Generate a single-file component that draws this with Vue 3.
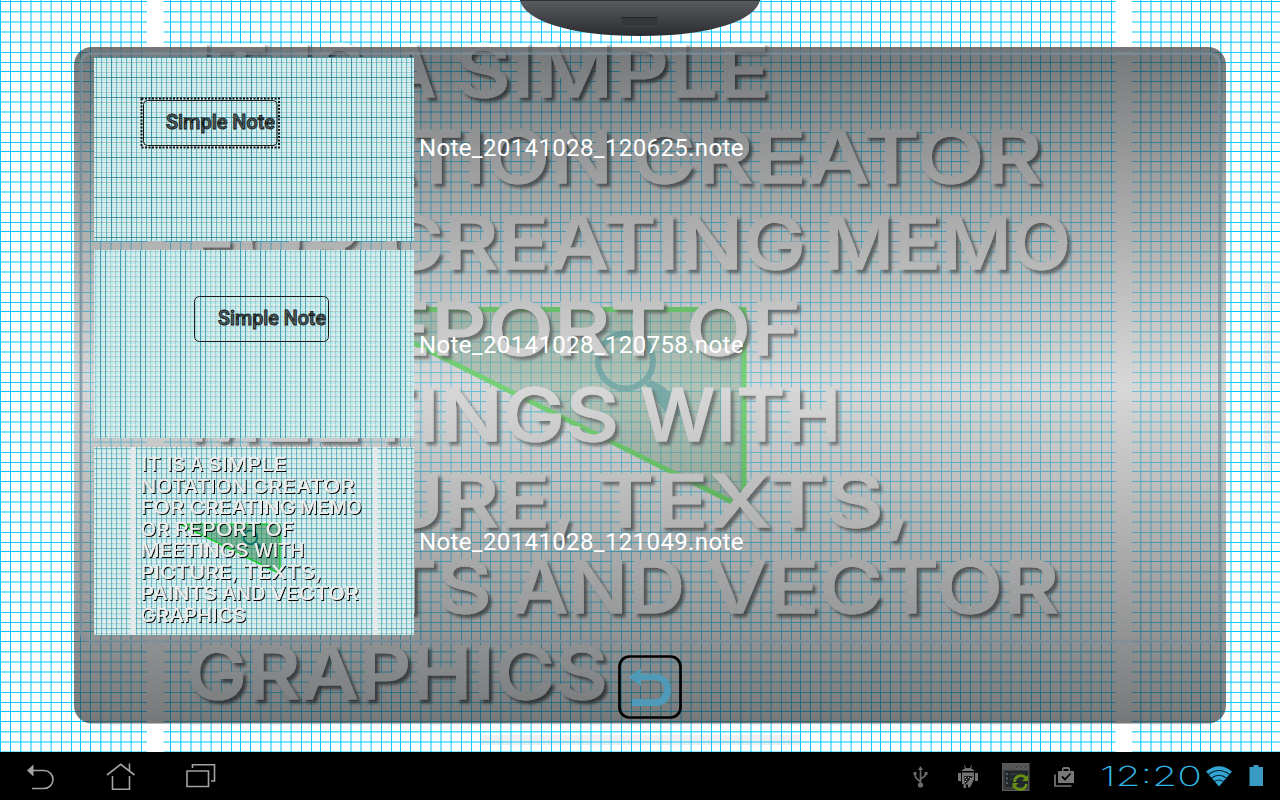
<script setup>
const words = [
  [97, [['IT', 190, 78], ['IS', 292, 72], ['A', 386, 50], ['SIMPLE', 455, 315]]],
  [183, [['NOTATION', 186, 427], ['CREATOR', 631, 411]]],
  [269, [['FOR', 186, 174], ['CREATING', 382, 424], ['MEMO', 823, 248]]],
  [355, [['OR', 186, 116], ['REPORT', 322, 345], ['OF', 686, 115]]],
  [441, [['MEETINGS', 186, 433], ['WITH', 640, 201]]],
  [527, [['PICTURE,', 186, 390], ['TEXTS,', 596, 315]]],
  [613, [['PAINTS', 186, 306], ['AND', 512, 173], ['VECTOR', 706, 353]]],
  [699, [['GRAPHICS', 186, 422]]],
]
const flat = words.flatMap(([y, ws]) => ws.map(([t, x, w]) => ({ t, x, w, y })))
// line offsets inside the 80px grid tile: [start, opacity]
const lines = [[0, 1], [10, 1], [20, 0.75], [21, 0.35], [30, 0.5], [31, 0.5], [40, 0.5], [41, 0.5], [50, 0.4], [51, 0.6], [61, 0.9], [71, 0.95]]
const notes = [
  { name: 'Note_20141028_120625.note', cls: 'first' },
  { name: 'Note_20141028_120758.note', cls: 'second' },
  { name: 'Note_20141028_121049.note', cls: 'third' },
]
</script>

<template>
  <main class="screen">
    <svg class="canvas" width="1280" height="752" viewBox="0 0 1280 752">
      <defs>
        <pattern id="grid" width="80" height="80" patternUnits="userSpaceOnUse">
          <rect v-for="l in lines" :key="'v' + l[0]" :x="l[0]" y="0" width="1" height="80" fill="#00c8ff" :opacity="l[1]" />
        </pattern>
        <pattern id="gridH" width="80" height="80" y="-9" patternUnits="userSpaceOnUse">
          <rect v-for="l in lines" :key="'h' + l[0]" x="0" :y="l[0]" width="80" height="1" fill="#00c8ff" :opacity="l[1]" />
        </pattern>
        <linearGradient id="panel" x1="0" y1="0" x2="0" y2="1">
          <stop offset="0" stop-color="#2f3133" stop-opacity=".66" />
          <stop offset=".5" stop-color="#bababa" stop-opacity=".57" />
          <stop offset="1" stop-color="#2f3133" stop-opacity=".66" />
        </linearGradient>
        <linearGradient id="knob" x1="0" y1="0" x2="0" y2="1">
          <stop offset="0" stop-color="#5b5c60" />
          <stop offset="1" stop-color="#2b2c2f" />
        </linearGradient>
        <filter id="lift" x="-5%" y="-5%" width="110%" height="112%">
          <feDropShadow dx="3.5" dy="3.5" stdDeviation="1.8" flood-color="#000" flood-opacity=".8" />
        </filter>
      </defs>
      <rect width="1280" height="752" fill="#fff" />
      <rect width="1280" height="752" fill="url(#grid)" />
      <rect width="1280" height="752" fill="url(#gridH)" />
      <rect x="147" width="16.500" height="752" fill="#fff" />
      <rect x="1115.500" width="16.500" height="752" fill="#fff" />
      <rect x="480" y="735" width="320" height="10" fill="#9a9aa8" opacity=".15" />
      <rect x="1264" y="283" width="8" height="200" fill="#9a9aa8" opacity=".15" />
      <g>
        <path d="M346 309.500H744V508Z" fill="#28823c" fill-opacity=".4" />
        <path d="M346 309.500H744V508Z" fill="none" stroke="#20f020" stroke-width="5" />
        <circle cx="625.500" cy="361" r="27.500" fill="none" stroke="#0c8a8a" stroke-width="6" opacity=".8" />
        <path d="M645 384L651 380 664 387 680 402V416L668 416Z" fill="#0c8a8a" opacity=".8" />
        <g class="display" filter="url(#lift)">
          <text v-for="w in flat" :key="w.t" :x="w.x" :y="w.y" :textLength="w.w" lengthAdjust="spacingAndGlyphs">{{ w.t }}</text>
        </g>
      </g>
      <rect x="74" y="47" width="1152" height="676.500" rx="18" fill="url(#panel)" />
      <rect x="92" y="47" width="1116" height="5" fill="#737679" opacity=".6" />
      <rect x="81" y="53.500" width="1138.500" height="588" rx="10" fill="none" stroke="#808e9a" stroke-width="3" opacity=".7" />
      <path d="M520 0H760C756 20 712 36 640 36S524 20 520 0Z" fill="url(#knob)" />
      <path d="M520 0H760" stroke="#303134" stroke-width="2" />
      <rect x="620.500" y="17.500" width="37.500" height="9" rx="2" fill="#37383b" stroke="#434447" />
      <path d="M622 17.500H657" stroke="#222326" />
    </svg>

    <ul class="notes">
      <li v-for="n in notes" :key="n.name" :class="['note', n.cls]">
        <svg class="thumb" viewBox="0 0 320 188" preserveAspectRatio="xMidYMin slice">
          <defs>
            <pattern :id="'t' + n.cls" width="20" height="20" patternUnits="userSpaceOnUse">
              <rect width="20" height="20" fill="#ebecea" />
              <g fill="#70f0fa" opacity=".34">
                <rect v-for="i in 4" :key="i" :x="i * 5 - 3" width="2" height="20" />
                <rect v-for="i in 4" :key="'b' + i" :y="i * 5 - 3" width="20" height="2" />
              </g>
              <g v-if="n.cls === 'first'" fill="#2a8294">
                <rect v-for="i in 4" :key="i" :x="i * 5 - 3" width="1" height="20" :opacity="i === 4 ? .85 : .5" />
                <rect width="20" height="1" opacity=".85" />
                <rect y="5" width="20" height="1" opacity=".4" />
                <rect y="10" width="20" height="1" opacity=".2" />
                <rect y="15" width="20" height="1" opacity=".3" />
              </g>
              <g v-else-if="n.cls === 'second'" fill="#2f93a8">
                <rect x="6" width="1" height="20" opacity=".9" />
                <rect x="11" width="1" height="20" opacity=".8" />
                <rect x="1" width="1" height="20" opacity=".3" />
                <rect x="16" width="1" height="20" opacity=".3" />
                <rect v-for="i in 4" :key="i" :y="i * 5 - 4" width="20" height="1" fill="#6b9a9c" opacity=".35" />
              </g>
              <g v-else fill="#2a8294">
                <rect v-for="i in 4" :key="i" :x="i * 5 - 3" width="1" height="20" opacity=".5" />
                <rect v-for="i in 4" :key="'h' + i" :y="i * 5 - 4" width="20" height="1" :opacity="i % 2 ? .5 : .25" />
              </g>
            </pattern>
            <filter id="edge" x="-5%" y="-5%" width="110%" height="112%">
              <feDropShadow dx="4" dy="4" stdDeviation="1.2" flood-color="#000" flood-opacity="1" />
            </filter>
          </defs>
          <rect width="320" height="188" :fill="`url(#t${n.cls})`" />
          <g v-if="n.cls === 'first'">
            <rect x="47.500" y="41.500" width="137.500" height="49" fill="none" stroke="#111" stroke-dasharray="2 1.500" stroke-width="2" />
            <rect x="49.500" y="43.500" width="133.500" height="45" rx="4" fill="none" stroke="#1a1a1a" />
            <text class="tag" x="72" y="72" textLength="109" lengthAdjust="spacingAndGlyphs">Simple Note</text>
          </g>
          <g v-else-if="n.cls === 'second'">
            <rect x="100.500" y="46.500" width="134" height="45" rx="5" fill="none" stroke="#1a1a1a" />
            <text class="tag" x="124" y="75" textLength="108" lengthAdjust="spacingAndGlyphs">Simple Note</text>
          </g>
          <g v-else>
            <rect x="37" width="4.500" height="188" fill="#e6e9e9" />
            <rect x="279" width="4.500" height="188" fill="#e6e9e9" />
            <g transform="scale(.25)">
              <path d="M346 309.500H744V508Z" fill="#208040" fill-opacity=".5" stroke="#00d010" stroke-width="5" />
              <circle cx="625.500" cy="361" r="27.500" fill="none" stroke="#0a7068" stroke-width="8" />
              <path d="M645 384L651 380 680 402V416H668Z" fill="#0a7068" />
              <g class="display small" filter="url(#edge)">
                <text v-for="w in flat" :key="w.t" :x="w.x" :y="w.y" :textLength="w.w" lengthAdjust="spacingAndGlyphs">{{ w.t }}</text>
              </g>
            </g>
          </g>
        </svg>
        <span class="name">{{ n.name }}</span>
      </li>
    </ul>

    <button class="back" aria-label="Back">
      <svg width="64" height="64" viewBox="618 655 64 64">
        <rect x="619.500" y="656.500" width="61" height="61" rx="10" fill="none" stroke="#000" stroke-width="2.700" />
        <path d="M628.500 677L641 668V674H656C676 674 676 706 656 706H632V699H655C667 699 667 680 655 680H641V686Z" fill="#4f9ab8" />
      </svg>
    </button>

    <footer class="bar">
      <svg width="1280" height="48" viewBox="0 752 1280 48" fill="none">
        <g stroke="#a3a3a3" stroke-width="1.600">
          <path d="M33 770.500H44a9 9 0 0 1 0 18H32" />
          <path d="M27 770.500L33.500 764.500V776.500Z" fill="#a3a3a3" stroke="none" />
          <path d="M107 775L120.700 764.300 134.500 775M129.500 763.500V770.500M112.500 776V789.300H129.500V776" />
          <path d="M187 771H208.500V786.500H187ZM192.500 768V764.800H214.500V781H211" />
        </g>
        <g stroke="#6c6c6c" stroke-width="1.600">
          <path d="M920.500 768V785M920.500 783C920.500 779 915 781 915 774M920.500 780C920.500 777 926 778 926 773" />
          <circle cx="920.500" cy="785" r="2.600" fill="#6c6c6c" stroke="none" />
          <path d="M920.500 766L923 770H918ZM913.500 772h3v3h-3ZM924.500 772h3v3h-3Z" fill="#6c6c6c" stroke="none" />
        </g>
        <g fill="#747474">
          <path d="M962 771C962.500 767 973.500 767 974 771ZM958 773h3v8h-3ZM975 773h3v8h-3ZM962 772.500h12v7l-4 8h-2v-3h-2v3.500h-2.500v-4H962Z" />
          <path d="M964.500 765.500L966 769M971.500 765.500L970 769" stroke="#747474" />
          <path d="M964 776L973 776 965 785Z" fill="#222" />
          <path d="M965 777h1v1h-1zM968 777h1v1h-1zM966 779h1v1h-1zM965 781h1v1h-1zM970 778h1v1h-1z" fill="#aaa" />
        </g>
        <rect x="1002.500" y="763.500" width="26.500" height="27" fill="#3a3b3b" stroke="#5c5c5c" />
        <rect x="1003" y="764" width="26" height="6" fill="#555" />
        <g fill="#333" stroke="#777" stroke-width=".6"><circle cx="1016.500" cy="767" r="1.400" /><circle cx="1021" cy="767" r="1.400" /><circle cx="1025.500" cy="767" r="1.400" /></g>
        <path d="M1005 771h23v16h-23Z" fill="#20272d" />
        <path d="M1006 773h2v2h-2ZM1006 777.500h2v2h-2ZM1006 782h2v2h-2Z" fill="#52606a" />
        <path d="M1010 774h7M1010 779h4" stroke="#3e474e" />
        <path d="M1014.500 782C1015 775 1023 774 1026 778M1026.500 784C1025 791 1017 791 1014.500 786" stroke="#668f14" stroke-width="2.800" />
        <path d="M1028 775V781H1022ZM1012.500 789V783H1018.500Z" fill="#668f14" />
        <path d="M1058 771h4v-2.500l1.500-1.500h5l1.500 1.500V771h4v12h-16ZM1063.500 771h5v-2h-5Z" fill="#777" fill-rule="evenodd" />
        <path d="M1055 774.500V786H1071.500" stroke="#777" stroke-width="1.700" />
        <path d="M1062 776.500l3 3 5.500-6" stroke="#000" stroke-width="1.800" />
        <text class="clock" x="1100" y="786" textLength="102" lengthAdjust="spacingAndGlyphs">12:20</text>
        <path d="M1206 771.500Q1219 761 1232 771.500L1219 786.500Z" fill="#33a6d3" />
        <path d="M1208.500 774.500Q1219 766.500 1229.500 774.500M1211.500 778Q1219 772.500 1226.500 778M1214.500 781.500Q1219 778.500 1223.500 781.500" stroke="#06202b" stroke-width="1.200" />
        <path d="M1249.500 767h4v-2h5v2h4.500v19h-13.500Z" fill="#399bc3" />
      </svg>
    </footer>
  </main>
</template>

<style>
body { margin: 0; background: #000; }
</style>

<style scoped>
.screen { position: relative; width: 1280px; height: 800px; overflow: hidden; display: flex; flex-direction: column; font-family: Roboto, sans-serif; }
.canvas { display: block; flex: none; }
.display { font: 500 72.900px Inter, sans-serif; fill: #fff; stroke: #fff; stroke-width: .8px; }
.small { fill: #e9eceb; stroke: none; }
.notes { position: absolute; left: 94px; top: 57px; margin: 0; padding: 0; list-style: none; display: flex; flex-direction: column; gap: 9px; }
.note { display: flex; align-items: center; gap: 5px; height: 188px; }
.note.first { height: 184px; }
.thumb { width: 320px; height: 100%; flex: none; display: block; }
.name { color: #fff; font-size: 24px; line-height: 28px; letter-spacing: .36px; white-space: nowrap; padding-top: 2px; }
.first .name { padding: 0 0 2px; }
.tag { font: 500 21px Roboto, sans-serif; fill: #536364; stroke: #1a1e1e; stroke-width: 1px; }
.back { position: absolute; left: 618px; top: 655px; width: 64px; height: 64px; padding: 0; border: 0; background: none; }
.back svg { display: block; }
.bar { height: 48px; flex: none; background: #000; }
.bar svg { display: block; }
.clock { font: 200 27.500px Inter, sans-serif; fill: #33b5e5; }
</style>
